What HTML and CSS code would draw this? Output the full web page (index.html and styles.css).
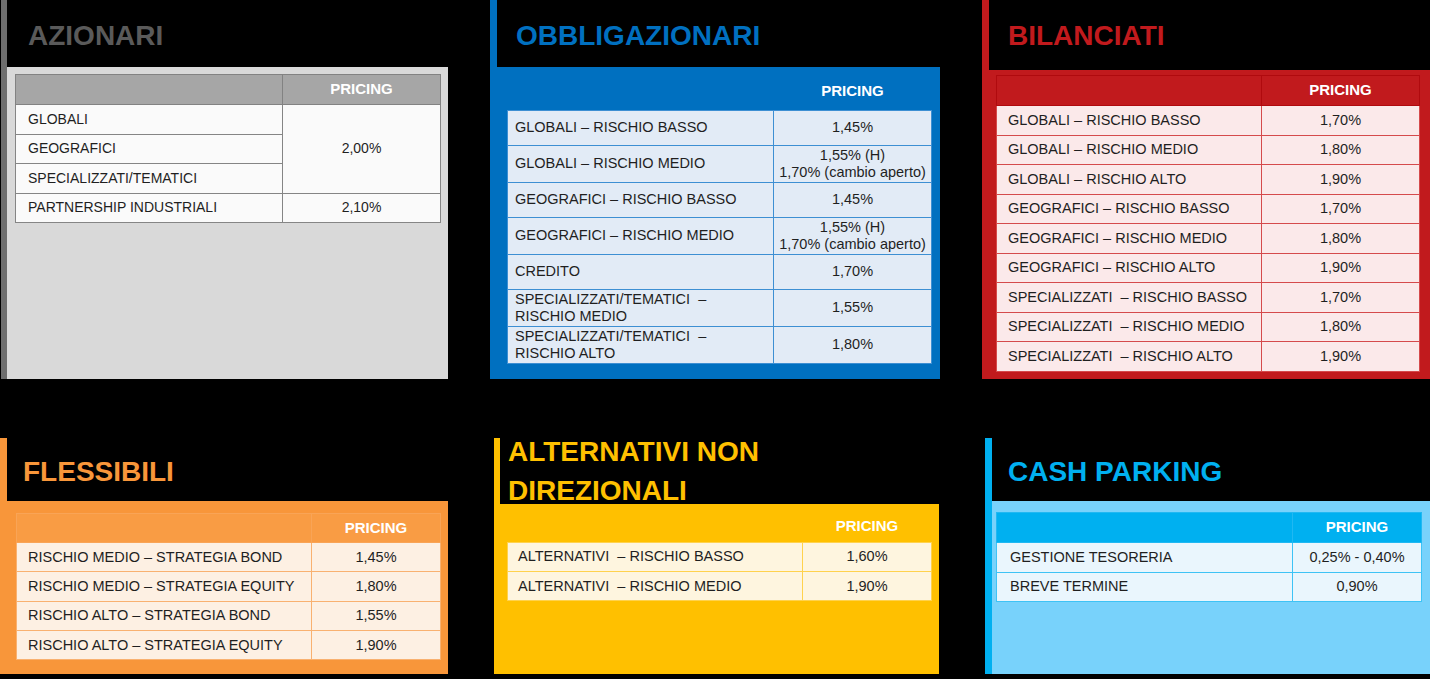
FILE: index.html
```html
<!DOCTYPE html>
<html lang="it">
<head>
<meta charset="utf-8">
<title>Pricing</title>
<link rel="stylesheet" href="styles.css">
</head>
<body>
<main class="board">
  <section class="row top">
    <article class="panel azi">
      <h2 class="title">AZIONARI</h2>
      <div class="box">
        <table class="pt">
          <colgroup><col class="c1"><col></colgroup>
          <thead><tr><th></th><th class="pr">PRICING</th></tr></thead>
          <tbody>
            <tr><td>GLOBALI</td><td class="pr" rowspan="3">2,00%</td></tr>
            <tr><td>GEOGRAFICI</td></tr>
            <tr><td>SPECIALIZZATI/TEMATICI</td></tr>
            <tr><td>PARTNERSHIP INDUSTRIALI</td><td class="pr">2,10%</td></tr>
          </tbody>
        </table>
      </div>
    </article>

    <article class="panel obb">
      <h2 class="title">OBBLIGAZIONARI</h2>
      <div class="box">
        <table class="pt">
          <colgroup><col class="c1"><col></colgroup>
          <thead><tr><th></th><th class="pr">PRICING</th></tr></thead>
          <tbody>
            <tr><td>GLOBALI – RISCHIO BASSO</td><td class="pr">1,45%</td></tr>
            <tr class="two"><td>GLOBALI – RISCHIO MEDIO</td><td class="pr">1,55% (H)<br>1,70% (cambio aperto)</td></tr>
            <tr><td>GEOGRAFICI – RISCHIO BASSO</td><td class="pr">1,45%</td></tr>
            <tr class="two"><td>GEOGRAFICI – RISCHIO MEDIO</td><td class="pr">1,55% (H)<br>1,70% (cambio aperto)</td></tr>
            <tr><td>CREDITO</td><td class="pr">1,70%</td></tr>
            <tr class="two"><td>SPECIALIZZATI/TEMATICI &nbsp;–<br>RISCHIO MEDIO</td><td class="pr">1,55%</td></tr>
            <tr class="two"><td>SPECIALIZZATI/TEMATICI &nbsp;–<br>RISCHIO ALTO</td><td class="pr">1,80%</td></tr>
          </tbody>
        </table>
      </div>
    </article>

    <article class="panel bil">
      <h2 class="title">BILANCIATI</h2>
      <div class="box">
        <table class="pt">
          <colgroup><col class="c1"><col></colgroup>
          <thead><tr><th></th><th class="pr">PRICING</th></tr></thead>
          <tbody>
            <tr><td>GLOBALI – RISCHIO BASSO</td><td class="pr">1,70%</td></tr>
            <tr><td>GLOBALI – RISCHIO MEDIO</td><td class="pr">1,80%</td></tr>
            <tr><td>GLOBALI – RISCHIO ALTO</td><td class="pr">1,90%</td></tr>
            <tr><td>GEOGRAFICI – RISCHIO BASSO</td><td class="pr">1,70%</td></tr>
            <tr><td>GEOGRAFICI – RISCHIO MEDIO</td><td class="pr">1,80%</td></tr>
            <tr><td>GEOGRAFICI – RISCHIO ALTO</td><td class="pr">1,90%</td></tr>
            <tr><td>SPECIALIZZATI &nbsp;– RISCHIO BASSO</td><td class="pr">1,70%</td></tr>
            <tr><td>SPECIALIZZATI &nbsp;– RISCHIO MEDIO</td><td class="pr">1,80%</td></tr>
            <tr><td>SPECIALIZZATI &nbsp;– RISCHIO ALTO</td><td class="pr">1,90%</td></tr>
          </tbody>
        </table>
      </div>
    </article>
  </section>

  <section class="row bottom">
    <article class="panel fle">
      <h2 class="title">FLESSIBILI</h2>
      <div class="box">
        <table class="pt">
          <colgroup><col class="c1"><col></colgroup>
          <thead><tr><th></th><th class="pr">PRICING</th></tr></thead>
          <tbody>
            <tr><td>RISCHIO MEDIO – STRATEGIA BOND</td><td class="pr">1,45%</td></tr>
            <tr><td>RISCHIO MEDIO – STRATEGIA EQUITY</td><td class="pr">1,80%</td></tr>
            <tr><td>RISCHIO ALTO – STRATEGIA BOND</td><td class="pr">1,55%</td></tr>
            <tr><td>RISCHIO ALTO – STRATEGIA EQUITY</td><td class="pr">1,90%</td></tr>
          </tbody>
        </table>
      </div>
    </article>

    <article class="panel alt">
      <h2 class="title">ALTERNATIVI NON<br>DIREZIONALI</h2>
      <div class="box">
        <table class="pt">
          <colgroup><col class="c1"><col></colgroup>
          <thead><tr><th></th><th class="pr">PRICING</th></tr></thead>
          <tbody>
            <tr><td>ALTERNATIVI &nbsp;– RISCHIO BASSO</td><td class="pr">1,60%</td></tr>
            <tr><td>ALTERNATIVI &nbsp;– RISCHIO MEDIO</td><td class="pr">1,90%</td></tr>
          </tbody>
        </table>
      </div>
    </article>

    <article class="panel cash">
      <h2 class="title">CASH PARKING</h2>
      <div class="box">
        <table class="pt">
          <colgroup><col class="c1"><col></colgroup>
          <thead><tr><th></th><th class="pr">PRICING</th></tr></thead>
          <tbody>
            <tr><td>GESTIONE TESORERIA</td><td class="pr">0,25% - 0,40%</td></tr>
            <tr><td>BREVE TERMINE</td><td class="pr">0,90%</td></tr>
          </tbody>
        </table>
      </div>
    </article>
  </section>
</main>
</body>
</html>
```

FILE: styles.css
```css
* { box-sizing: border-box; }

html, body {
  margin: 0;
  padding: 0;
  background: #000;
}

body {
  width: 1430px;
  height: 679px;
  overflow: hidden;
  font-family: "Liberation Sans", Arial, sans-serif;
}

.board {
  display: flex;
  flex-direction: column;
}

.row {
  display: flex;
  justify-content: space-between;
}

.row.top {
  height: 379px;
  padding-left: 1px;
}

.row.bottom {
  margin-top: 59px;
  height: 236px;
}

.panel {
  display: flex;
  flex-direction: column;
  border-left: 7px solid var(--accent);
}

.title {
  margin: 0;
  font-size: 28px;
  line-height: 32px;
  font-weight: bold;
  color: var(--title);
  flex: none;
  white-space: nowrap;
}

.box {
  flex: 1;
  background: var(--box);
}

/* tables */
.pt {
  width: 100%;
  border-collapse: collapse;
  table-layout: fixed;
  font-size: 14.5px;
  color: #1f1f1f;
}

.pt th,
.pt td {
  border: 1px solid var(--line);
  padding: 0 0 0 var(--pad);
  text-align: left;
  vertical-align: middle;
  line-height: 16.6px;
  white-space: nowrap;
}

.pt td { background: var(--cell); }

.pt th {
  color: #fff;
  font-weight: bold;
  font-size: 15px;
  background: var(--head);
  border-color: var(--headline);
}

.pt .pr {
  text-align: center;
  padding: 0;
}

/* ---------- AZIONARI ---------- */
.azi {
  width: 447px;
  border-left-width: 6px;
  --accent: #6e6e6e;
  --title: #5a5a5a;
  --box: #d9d9d9;
  --head: #a6a6a6;
  --headline: #828282;
  --cell: #fafafa;
  --line: #858585;
  --pad: 12px;
}
.azi .title { height: 67px; padding: 20px 0 0 21px; }
.azi .box { padding: 7px 7px 0 8px; }
.azi .pt { font-size: 14px; }
.azi .c1 { width: 267px; }
.azi thead tr { height: 30px; }
.azi tbody tr { height: 29.5px; }

/* ---------- OBBLIGAZIONARI ---------- */
.obb {
  width: 450px;
  --accent: #0070c0;
  --title: #0070c0;
  --box: #0070c0;
  --head: transparent;
  --headline: transparent;
  --cell: #e2ebf6;
  --line: #3d8fd3;
  --pad: 7px;
}
.obb .title { height: 67px; padding: 20px 0 0 19px; }
.obb .box { padding: 7px 8px 0 10px; }
.obb .pt th { border: none; }
.obb .c1 { width: 266px; }
.obb thead tr { height: 36px; }
.obb tbody tr { height: 35px; }
.obb tbody tr.two { height: 37px; }

/* ---------- BILANCIATI ---------- */
.bil {
  width: 448px;
  --accent: #c11a1d;
  --title: #c11a1d;
  --box: #c11a1d;
  --head: #c11a1d;
  --headline: #b00a0e;
  --cell: #fbe9ea;
  --line: #d54a4c;
  --pad: 11px;
}
.bil .title { height: 70px; padding: 20px 0 0 19px; }
.bil .box { padding: 5px 10px 0 7px; }
.bil .c1 { width: 265px; }
.bil thead tr { height: 30px; }
.bil tbody tr { height: 29.5px; }

/* ---------- FLESSIBILI ---------- */
.fle {
  width: 448px;
  --accent: #f8963a;
  --title: #f8963a;
  --box: #f8963a;
  --head: #f99c44;
  --headline: #f9a456;
  --cell: #fdf0e3;
  --line: #f9b170;
  --pad: 11px;
}
.fle .title { height: 63px; padding: 18px 0 0 16px; }
.fle .box { padding: 12px 7px 0 9px; }
.fle .c1 { width: 295px; }
.fle thead tr { height: 29px; }
.fle tbody tr { height: 29.3px; }

/* ---------- ALTERNATIVI ---------- */
.alt {
  width: 445px;
  border-left-width: 6px;
  --accent: #ffc000;
  --title: #ffc000;
  --box: #ffc000;
  --head: transparent;
  --headline: transparent;
  --cell: #fef5df;
  --line: #ffd24d;
  --pad: 10px;
}
.alt .title {
  height: 72px;
  margin-top: -6px;
  line-height: 39px;
  padding: 0 0 0 8px;
}
.alt .box { padding: 8px 7px 0 7px; }
.alt .pt th { border: none; }
.alt .c1 { width: 295px; }
.alt thead tr { height: 30px; }
.alt tbody tr { height: 29.3px; }

/* ---------- CASH PARKING ---------- */
.cash {
  width: 445px;
  --accent: #00b0f0;
  --title: #00b0f0;
  --box: #78d2fb;
  --head: #00b0f0;
  --headline: #20b8f2;
  --cell: #eaf6fd;
  --line: #3ec3f5;
  --pad: 13px;
}
.cash .title { height: 63px; padding: 18px 0 0 16px; }
.cash .box { padding: 11px 8px 0 4px; }
.cash .c1 { width: 296px; }
.cash thead tr { height: 30px; }
.cash tbody tr { height: 29.5px; }
```
